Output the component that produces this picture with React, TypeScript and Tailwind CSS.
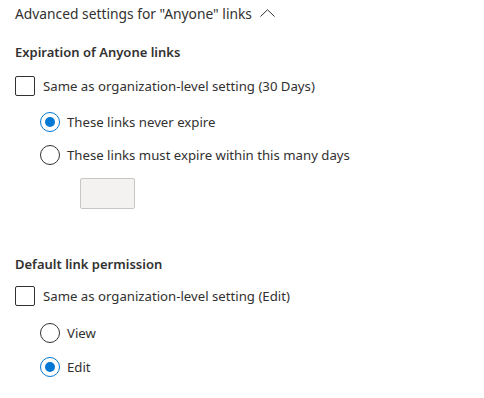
import React from "react";

function Checkbox({ label }: { label: string }) {
  return (
    <label className="flex items-center h-5">
      <span className="w-5 h-5 border border-[#323130] rounded-[2px] bg-white shrink-0" />
      <span className="ml-2 leading-5">{label}</span>
    </label>
  );
}

function Radio({ label, checked }: { label: string; checked?: boolean }) {
  return (
    <label className="flex items-center h-5">
      <span
        className={
          checked
            ? "w-5 h-5 rounded-full border border-[#0078d4] flex items-center justify-center shrink-0"
            : "w-5 h-5 rounded-full border border-[#323130] shrink-0"
        }
      >
        {checked && <span className="w-[10px] h-[10px] rounded-full bg-[#0078d4]" />}
      </span>
      <span className="ml-[7px] leading-5">{label}</span>
    </label>
  );
}

export default function App() {
  return (
    <div
      className="w-[484px] h-[398px] bg-white text-[#323130] text-[13.2px] pl-[15px] pt-[4px]"
      style={{ fontFamily: '"Noto Sans", "Open Sans", sans-serif' }}
    >
      <div className="flex items-center h-5 leading-5 text-[13.8px]">
        <span>Advanced settings for "Anyone" links</span>
        <svg width="15" height="8" viewBox="0 0 15 8" className="ml-[8px] -mt-[2px]" fill="none">
          <path d="M0.5 7.5 L7.5 0.8 L14.5 7.5" stroke="#323130" strokeWidth="1" />
        </svg>
      </div>

      <div className="mt-[18px] h-5 leading-5 font-semibold text-[13px]">Expiration of Anyone links</div>
      <div className="mt-[14px]">
        <Checkbox label="Same as organization-level setting (30 Days)" />
      </div>
      <div className="pl-[25px] mt-[16px] flex flex-col gap-[13px]">
        <Radio label="These links never expire" checked />
        <Radio label="These links must expire within this many days" />
      </div>
      <div className="pl-[65px] mt-[13px]">
        <input
          disabled
          className="w-[55px] h-[31px] bg-[#f3f2f1] border border-[#c8c6c4] rounded-[2px] block"
        />
      </div>

      <div className="mt-[45px] h-5 leading-5 font-semibold text-[13px]">Default link permission</div>
      <div className="mt-[12px]">
        <Checkbox label="Same as organization-level setting (Edit)" />
      </div>
      <div className="pl-[25px] mt-[17px] flex flex-col gap-[14px]">
        <Radio label="View" />
        <Radio label="Edit" checked />
      </div>
    </div>
  );
}
